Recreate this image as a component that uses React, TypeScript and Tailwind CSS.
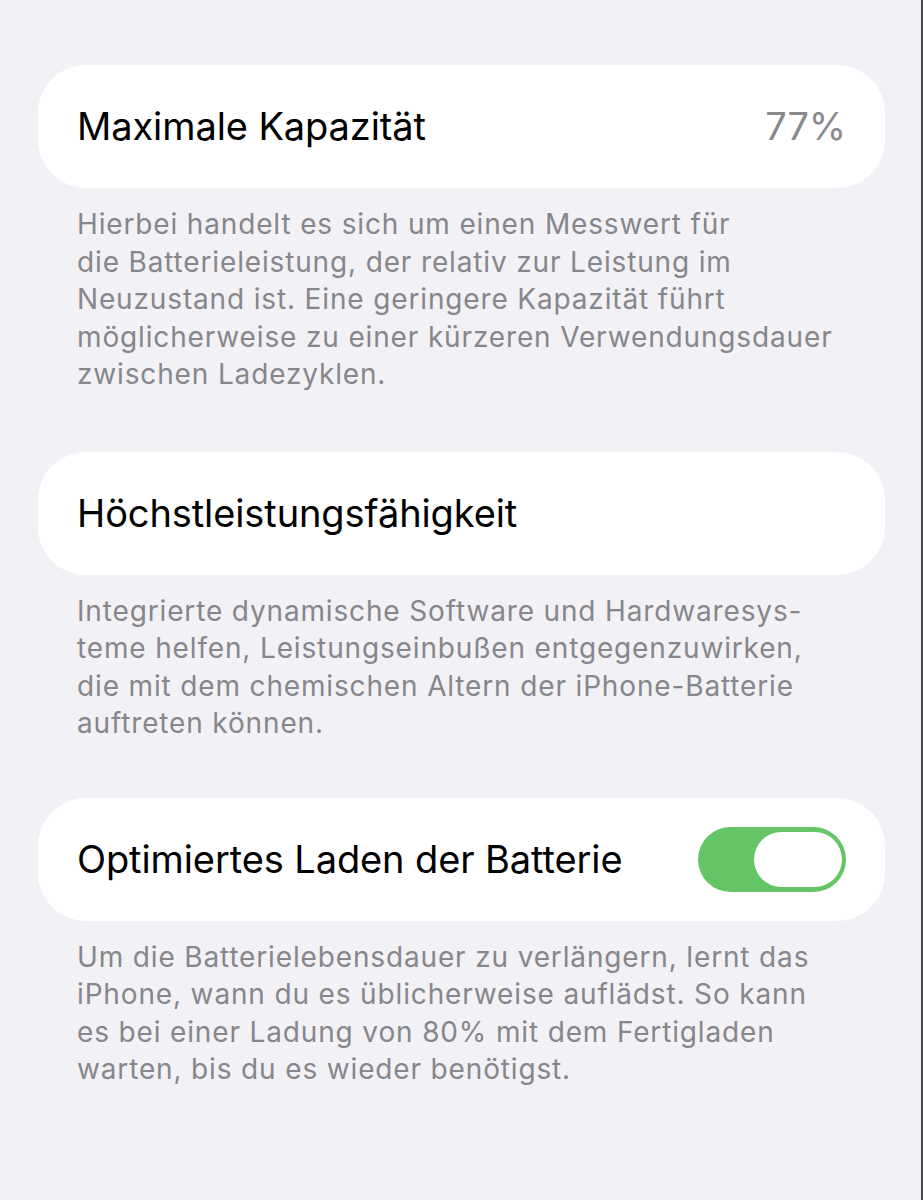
import React from "react";

const font = { fontFamily: "Inter, 'Noto Sans', 'Liberation Sans', sans-serif" };

function Footer({ lines }: { lines: string[] }) {
  return (
    <div className="mt-[18px] pl-[77px] text-[28px] leading-[37.5px] text-[#86868b] tracking-[0.85px]">
      {lines.map((l) => (
        <div key={l} className="whitespace-nowrap">
          {l}
        </div>
      ))}
    </div>
  );
}

function Toggle() {
  return (
    <div className="flex h-[65px] w-[148px] items-center justify-end rounded-full bg-[#65c466] pr-[4px]">
      <div className="h-[55px] w-[88px] rounded-full bg-white" />
    </div>
  );
}

function Row({ children }: { children: React.ReactNode }) {
  return (
    <div className="mx-[38px] flex h-[123px] w-[847px] items-center justify-between rounded-[48px] bg-white pl-[39px] pr-[39px]">
      {children}
    </div>
  );
}

export default function App() {
  return (
    <div className="relative flex min-h-[1200px] w-[923px] flex-col bg-[#f2f1f6] pt-[65px]" style={font}>
      <Row>
        <span className="text-[38px] tracking-[-0.1px] text-black">Maximale Kapazität</span>
        <span className="text-[38px] tracking-[-0.1px] text-[#8a8a8e]">77%</span>
      </Row>
      <Footer
        lines={[
          "Hierbei handelt es sich um einen Messwert für",
          "die Batterieleistung, der relativ zur Leistung im",
          "Neuzustand ist. Eine geringere Kapazität führt",
          "möglicherweise zu einer kürzeren Verwendungsdauer",
          "zwischen Ladezyklen.",
        ]}
      />

      <div className="mt-[58px]">
        <Row>
          <span className="text-[38px] tracking-[-0.1px] text-black">Höchstleistungsfähigkeit</span>
        </Row>
      </div>
      <Footer
        lines={[
          "Integrierte dynamische Software und Hardwaresys-",
          "teme helfen, Leistungseinbußen entgegenzuwirken,",
          "die mit dem chemischen Altern der iPhone-Batterie",
          "auftreten können.",
        ]}
      />

      <div className="mt-[55px]">
        <Row>
          <span className="text-[38px] tracking-[-0.1px] text-black">Optimiertes Laden der Batterie</span>
          <Toggle />
        </Row>
      </div>
      <Footer
        lines={[
          "Um die Batterielebensdauer zu verlängern, lernt das",
          "iPhone, wann du es üblicherweise auflädst. So kann",
          "es bei einer Ladung von 80% mit dem Fertigladen",
          "warten, bis du es wieder benötigst.",
        ]}
      />

      <div className="absolute right-0 top-0 h-full w-[2px] bg-[#4a4a4c]" />
    </div>
  );
}
